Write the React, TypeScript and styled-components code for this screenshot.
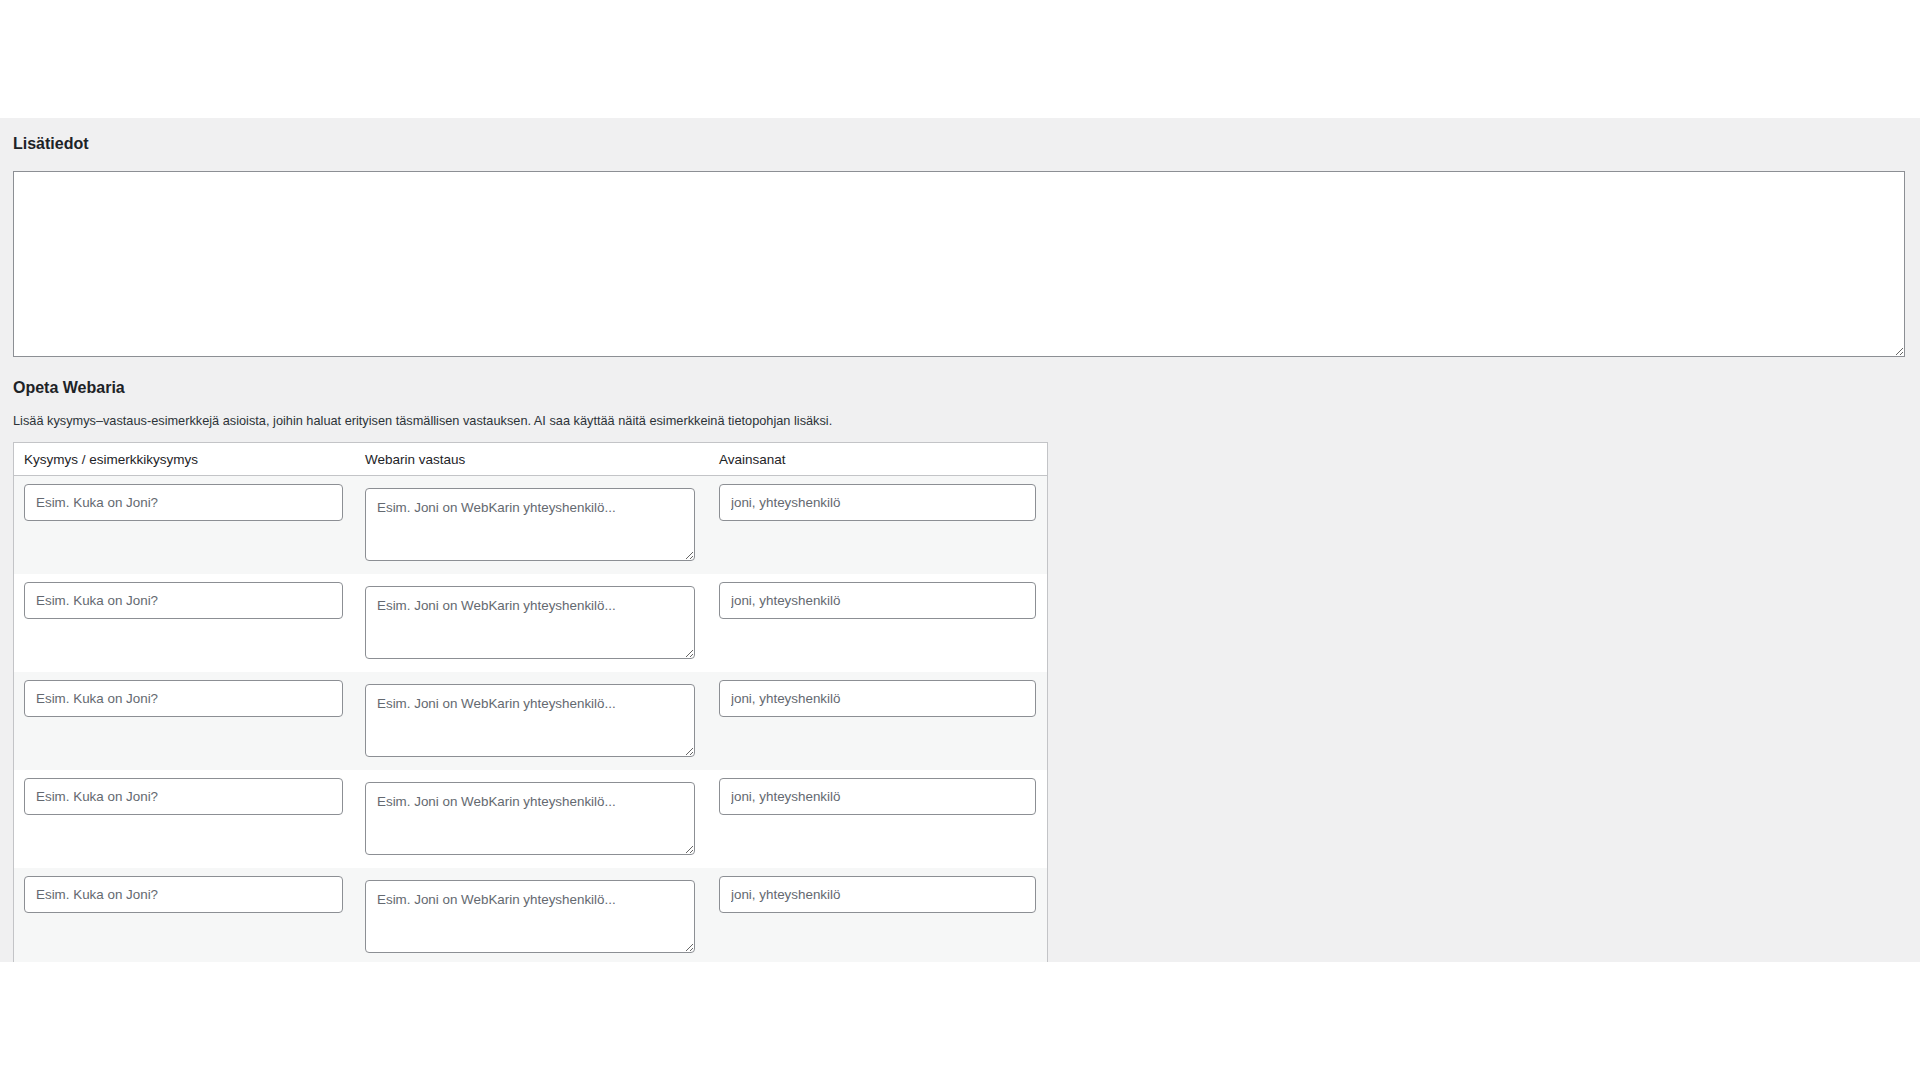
import React from "react";
import styled, { createGlobalStyle } from "styled-components";

const GlobalStyle = createGlobalStyle`
  html, body {
    margin: 0;
    padding: 0;
    background: #ffffff;
  }
  body {
    font-family: "Liberation Sans", Arial, Helvetica, sans-serif;
    color: #1d2327;
  }
  * {
    box-sizing: border-box;
  }
`;

const TopBar = styled.div`
  height: 118px;
  background: #ffffff;
`;

const Screen = styled.main`
  height: 844px;
  overflow: hidden;
  background: #f0f0f1;
  padding: 16px 15px 0 13px;
`;

const SectionTitle = styled.h2<{ $gap: number }>`
  margin: 0 0 ${(p) => p.$gap}px;
  font-size: 16px;
  line-height: 20px;
  font-weight: 700;
  color: #1d2327;
`;

const NotesArea = styled.textarea`
  display: block;
  width: 100%;
  height: 186px;
  margin: 0 0 21px;
  padding: 6px 8px;
  border: 1px solid #8c8f94;
  border-radius: 0;
  background: #ffffff;
  font: 13px/18px "Liberation Sans", Arial, sans-serif;
  color: #2c3338;
  resize: both;
  outline: none;
`;

const Description = styled.p`
  margin: 0 0 13px;
  font-size: 12.75px;
  line-height: 16px;
  color: #2c3338;
`;

const Table = styled.div`
  width: 1035px;
  border: 1px solid #c3c4c7;
  background: #ffffff;
`;

const Row = styled.div<{ $striped?: boolean; $head?: boolean }>`
  display: grid;
  grid-template-columns: 341px 354px 338px;
  background: ${(p) => (p.$striped ? "#f6f7f7" : "#ffffff")};
  border-bottom: ${(p) => (p.$head ? "1px solid #c3c4c7" : "none")};
`;

const HeadCell = styled.div`
  height: 32px;
  padding: 0 10px;
  display: flex;
  align-items: center;
  font-size: 13.5px;
  color: #1d2327;
`;

const Cell = styled.div`
  height: 98px;
  padding: 8px 10px 0;
`;

const TextInput = styled.input<{ $w: number }>`
  display: block;
  width: ${(p) => p.$w}px;
  height: 37px;
  margin: 0;
  padding: 0 11px;
  border: 1px solid #8c8f94;
  border-radius: 4px;
  background: #ffffff;
  font: 13.4px "Liberation Sans", Arial, sans-serif;
  color: #2c3338;
  outline: none;

  &::placeholder {
    color: #646970;
  }
`;

const AnswerArea = styled.textarea`
  display: block;
  width: 330px;
  height: 73px;
  margin: 4px 0 0;
  padding: 10px 11px;
  border: 1px solid #8c8f94;
  border-radius: 4px;
  background: #ffffff;
  font: 13.4px/18px "Liberation Sans", Arial, sans-serif;
  color: #2c3338;
  resize: vertical;
  outline: none;

  &::placeholder {
    color: #646970;
  }
`;

const rows = [0, 1, 2, 3, 4];

export default function App() {
  return (
    <>
      <GlobalStyle />
      <TopBar />
      <Screen>
        <SectionTitle $gap={17}>Lisätiedot</SectionTitle>
        <NotesArea />
        <SectionTitle $gap={15}>Opeta Webaria</SectionTitle>
        <Description>
          Lisää kysymys–vastaus-esimerkkejä asioista, joihin haluat erityisen
          täsmällisen vastauksen. AI saa käyttää näitä esimerkkeinä tietopohjan
          lisäksi.
        </Description>
        <Table>
          <Row $head>
            <HeadCell>Kysymys / esimerkkikysymys</HeadCell>
            <HeadCell>Webarin vastaus</HeadCell>
            <HeadCell>Avainsanat</HeadCell>
          </Row>
          {rows.map((i) => (
            <Row key={i} $striped={i % 2 === 0}>
              <Cell>
                <TextInput $w={319} placeholder="Esim. Kuka on Joni?" />
              </Cell>
              <Cell>
                <AnswerArea placeholder="Esim. Joni on WebKarin yhteyshenkilö..." />
              </Cell>
              <Cell>
                <TextInput $w={317} placeholder="joni, yhteyshenkilö" />
              </Cell>
            </Row>
          ))}
        </Table>
      </Screen>
    </>
  );
}
